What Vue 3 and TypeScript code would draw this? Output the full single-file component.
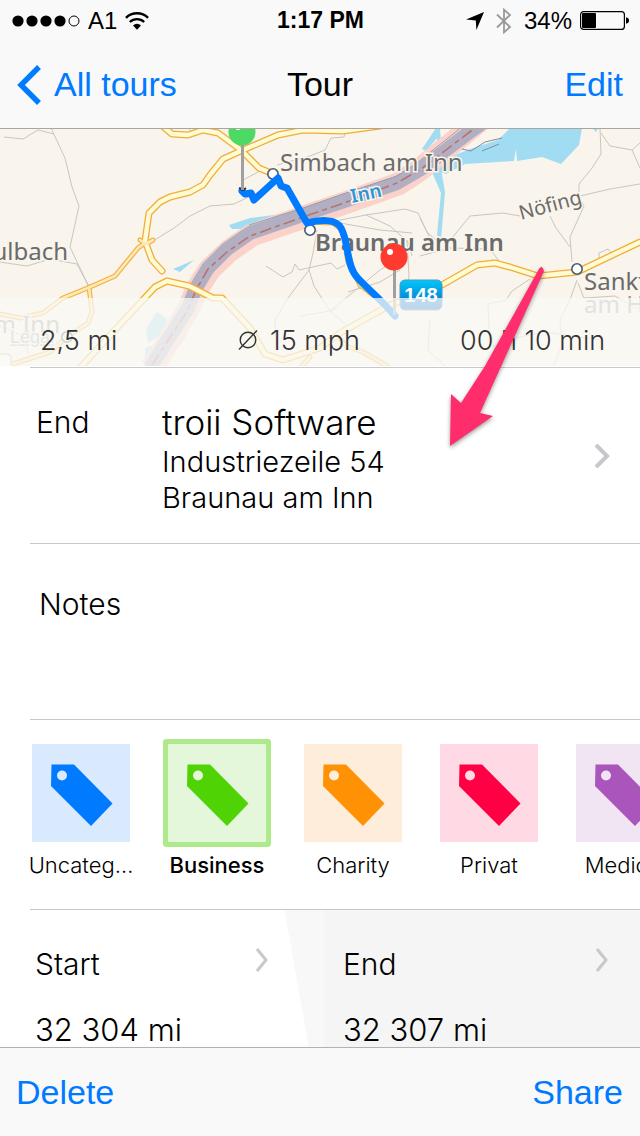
<script setup lang="ts">
import { ref } from 'vue'

interface Tag {
  id: string
  label: string
  shown: string
  tone: string
}

const tags: Tag[] = [
  { id: 'uncategorized', label: 'Uncategorized', shown: 'Uncateg…', tone: 'blue' },
  { id: 'business', label: 'Business', shown: 'Business', tone: 'green' },
  { id: 'charity', label: 'Charity', shown: 'Charity', tone: 'orange' },
  { id: 'privat', label: 'Privat', shown: 'Privat', tone: 'red' },
  { id: 'medical', label: 'Medical', shown: 'Medical', tone: 'purple' },
]

const selected = ref('business')
const notes = ref('')

const mainRoads: string[] = [
  'M160 124L172 134L188 135L203 130L218 133L241 150L259 168L271 173',
  'M380 126L343 131L303 130L278 135L243 150L223 159L210 175L203 185L190 192L170 197L160 202L149 213L145 241L152 260L162 271',
  'M80 368L113 332L155 287L167 281L189 286L213 298L222 298L236 313L250 328L265 354L283 360L320 348L340 333L390 305L442 285L477 265L495 263L510 267L538 276L577 272L640 242',
]

const sideRoads: string[] = [
  'M140 240L146 244L153 240M145 243L138 248L115 276L90 287L63 298L43 313L20 318L0 314',
  'M89 287L92 312L88 323L67 337L50 352L10 365',
  'M337 335L346 346L363 352L387 366M310 357L300 368',
  'M279 178L283 188L288 189L306 222L333 223L342 230L348 262L360 285L378 299',
]

const lanes: string[] = [
  'M4 137L23 139L38 130L54 134M51 128L65 158L72 187L79 206L70 247L89 287',
  'M0 262L27 266L50 259L77 264L89 287',
  'M153 241L174 228L190 216L210 206L234 204L263 190',
  'M243 180L262 170M277 165L310 156L325 150L331 138L344 137L345 132M189 128L191 132',
  'M330 222L366 215L405 209L418 213L427 232L438 242',
  'M340 223L380 230L412 233M366 215L390 226L408 242L412 256',
  'M266 266L283 277L292 272L295 264L299 270L331 263L337 269L345 265',
  'M317 230L313 253L309 270L314 286L330 311L350 328',
  'M309 270L288 298L275 320L276 345M330 311L380 270L399 258M338 308L330 311L300 316',
  'M348 292L380 282L400 270M407 240L409 276L405 300',
  'M600 128L601 154L592 168L579 184L579 196L584 206L570 237L572 262',
  'M601 133L610 146L632 150L640 143M632 150L640 168M580 196L610 189L640 184',
  'M452 238L470 216L503 213L520 216M550 216L556 228L570 247',
  'M420 218L430 238M420 256L450 248L490 249L499 261M599 260V253L608 249L612 254',
  'M530 279L512 291L506 300L488 304L489 330L500 368M577 280L571 297L560 320L562 345L553 368M578 283L584 298L615 296L640 310',
  'M430 320L428 350L445 366M505 340L545 332L600 340M0 326L23 336L30 358',
]
</script>

<template>
  <div class="screen">
    <header class="top">
      <div class="status">
        <div class="status-side">
          <svg class="signal" viewBox="0 0 68 12" aria-label="Signal strength 4 of 5" role="img">
            <circle cx="6" cy="6" r="5.6" /><circle cx="20" cy="6" r="5.6" />
            <circle cx="34" cy="6" r="5.6" /><circle cx="48" cy="6" r="5.6" />
            <circle cx="62" cy="6" r="5" fill="none" stroke="#000" />
          </svg>
          <span class="carrier">A1</span>
          <svg class="wifi" viewBox="0 0 24 18" aria-label="Wi-Fi" role="img">
            <path d="M0.9 5.8A16 16 0 0 1 23.1 5.8" fill="none" stroke="#000" stroke-width="2.4" />
            <path d="M4.8 10A10.4 10.4 0 0 1 19.2 10" fill="none" stroke="#000" stroke-width="2.3" />
            <path d="M12 17.8L8 13.4A6 6 0 0 1 16 13.4Z" />
          </svg>
        </div>
        <span class="clock">1:17 PM</span>
        <div class="status-side status-end">
          <svg class="locate" viewBox="0 0 18 18" aria-label="Location in use" role="img">
            <path d="M18 0L0 7.6L9.8 8.4L10.4 18Z" />
          </svg>
          <svg class="bluetooth" viewBox="0 0 16 26" aria-label="Bluetooth" role="img">
            <path d="M1 6.5L14 19L8 24.3V1.7L14 7L1 19.5" fill="none" stroke="#999" stroke-width="1.8" />
          </svg>
          <span>34%</span>
          <svg class="battery" viewBox="0 0 49 19" aria-label="Battery" role="img">
            <rect x="0.6" y="0.6" width="43.8" height="17.8" rx="3" fill="none" stroke="#000" stroke-width="1.2" />
            <rect x="2" y="2" width="14" height="15" rx="1" />
            <path d="M46 6.2Q49 6.8 49 9.5T46 12.8Z" />
          </svg>
        </div>
      </div>
      <nav class="nav">
        <a class="back" href="#tours">
          <svg class="back-icon" viewBox="0 0 25 40" aria-hidden="true">
            <path d="M22 2L4 20L22 38" fill="none" stroke="#007aff" stroke-width="5.4" />
          </svg>
          <span>All tours</span>
        </a>
        <h1 class="title">Tour</h1>
        <button class="bar-button edit" type="button">Edit</button>
      </nav>
    </header>

    <main class="content">
      <section class="map-area" aria-label="Route map">
        <svg class="map" viewBox="0 129 640 237" preserveAspectRatio="xMidYMid slice">
          <defs>
            <linearGradient id="shield" x1="0" y1="0" x2="0" y2="1">
              <stop offset="0" stop-color="#00c8f8" /><stop offset="1" stop-color="#0a62c8" />
            </linearGradient>
          </defs>
          <rect x="0" y="129" width="640" height="237" fill="#f9f5ed" />
          <g fill="none" stroke="#c9c6bf" stroke-width="1">
            <path v-for="d in lanes" :key="d" :d="d" />
          </g>
          <g fill="#a2dcf2">
            <path d="M510 128H582L579 145L561 164L542 157L517 161L516 149L514 161L465 164L446 174L436 170L452 156L473 148L498 140Z" />
            <path d="M436 170L441 169L445 192L441 240L437 235L441 193L432 172Z" />
            <path d="M440 128H436L422 149L426 151L437 138V147L441 143Z" />
            <path d="M592 128H598L596 132Z" />
            <path d="M229 225L250 218L298 212L290 222L253 232L244 229L232 229Z" />
            <path d="M173 269L194 260L180 272Z" />
            <path d="M157 312L167 319L165 332L148 343L146 329ZM161 343L145 348V357L155 352Z" />
            <path d="M176 340L197 310L184 340L160 366Z" />
          </g>
          <g fill="none" stroke-linejoin="round">
            <path d="M488 114L461 136L418 171L398 184L345 203L304 217L252 235L229 251L210 269L197 289L189 308L152 368" stroke="#fad2ca" stroke-width="23" />
            <path d="M492 116L471 131L421 169L397 183L344 201L303 215L250 233L227 249L208 268L196 288L188 308L150 368" stroke="#b3afc3" stroke-width="14" />
            <path d="M480 112L463 126L417 163L397 176L343 194L303 208L249 225" stroke="#9a9eac" stroke-width="1" />
            <path d="M492 116L471 131L421 169L397 183L344 203L303 217L250 236L227 252L208 269L196 290L188 310L150 368" stroke="#b8736c" stroke-width="1.6" stroke-dasharray="12 4 5 4" />
            <path d="M462 149L471 151L485 142L502 138M482 151L499 144" stroke="#858c94" stroke-width="1" />
          </g>
          <g fill="none" stroke-linejoin="round" stroke-linecap="round">
            <path v-for="d in mainRoads" :key="d" :d="d" stroke="#f1ad3a" stroke-width="7" />
            <path v-for="d in sideRoads" :key="d" :d="d" stroke="#f1b04a" stroke-width="5" />
            <path v-for="d in mainRoads" :key="d" :d="d" stroke="#fffbd2" stroke-width="4.4" />
            <path v-for="d in sideRoads" :key="d" :d="d" stroke="#fdeab2" stroke-width="2.6" />
          </g>
          <g fill="#fff" stroke="#475b75" stroke-width="1.6">
            <circle cx="273" cy="174" r="5.2" /><circle cx="310" cy="230" r="5.2" /><circle cx="577" cy="269" r="5.2" />
            <circle cx="67" cy="337" r="5.2" />
          </g>
          <g class="place">
            <text x="280" y="171">Simbach am Inn</text>
            <text class="strong" x="315" y="251">Braunau am Inn</text>
            <text x="68" y="260" text-anchor="end">aulbach</text>
            <text x="584" y="290">Sankt</text>
            <text class="dim" x="584" y="313">am H</text>
            <text class="dim" x="60" y="333" text-anchor="end">m Inn</text>
            <text class="small" transform="translate(521 220) rotate(-15)">Nöfing</text>
            <text class="river" transform="translate(352 203) rotate(-12)">Inn</text>
            <text class="legal" x="10" y="343">Legal</text>
          </g>
          <rect x="-12" y="354" width="23" height="20" rx="4" fill="#fff" stroke="#aaa" />
          <path
            d="M242 191L245 194L251 193L254 200L278 178L281 186L287 188L307 223C318 220 336 218 341 228C349 242 346 264 356 276C364 286 378 296 395 316"
            fill="none" stroke="#007aff" stroke-width="7" stroke-linejoin="round" stroke-linecap="round"
          />
          <rect x="400" y="280" width="42" height="30" rx="5" fill="url(#shield)" stroke="#4e95c8" />
          <text class="shield-text" x="421" y="302" text-anchor="middle">148</text>
          <g>
            <path d="M239 188L243 190L246 188" fill="none" stroke="#333" stroke-width="2" />
            <path d="M242.500 142V190M394.500 268V315" stroke="#a0a0a0" stroke-width="3" />
            <circle cx="242" cy="132" r="13.500" fill="#4cd964" /><circle cx="238" cy="127" r="3" fill="#fff" />
            <circle cx="394" cy="257" r="13.500" fill="#ff3b30" /><circle cx="390" cy="252" r="3" fill="#fff" />
          </g>
        </svg>
        <div class="stats">
          <span>2,5 mi</span>
          <span class="average">
            <svg class="average-icon" viewBox="0 0 20 22" aria-label="Average" role="img">
              <circle cx="10" cy="11" r="7.800" fill="none" stroke="#333" stroke-width="1.4" />
              <path d="M1 20.500L19 1.500" stroke="#333" stroke-width="1.4" />
            </svg>
            15 mph
          </span>
          <span>00 h 10 min</span>
        </div>
      </section>

      <a class="row place-row" href="#end">
        <span class="row-label">End</span>
        <span class="address">
          <span class="address-name">troii Software</span>
          <span>Industriezeile 54</span>
          <span>Braunau am Inn</span>
        </span>
        <svg class="row-chevron" viewBox="0 0 16 26" aria-hidden="true">
          <path d="M2 2L13 13L2 24" fill="none" stroke="#c7c7cc" stroke-width="4" />
        </svg>
      </a>

      <section class="row">
        <textarea v-model="notes" class="notes" placeholder="Notes" aria-label="Notes" />
      </section>

      <section class="row tags" aria-label="Category">
        <button
          v-for="tag in tags" :key="tag.id" type="button" class="tag"
          :class="[tag.tone, { selected: selected === tag.id }]"
          :aria-pressed="selected === tag.id" :aria-label="tag.label"
          @click="selected = tag.id"
        >
          <span class="tile">
            <svg viewBox="0 0 98 98" aria-hidden="true">
              <path
                fill-rule="evenodd"
                d="M19.500 20.500H42L80.500 59.500L59 82L19 42ZM30 26.500A5 5 0 1 0 30 36.500A5 5 0 1 0 30 26.500Z"
              />
            </svg>
          </span>
          <span class="tag-label">{{ tag.shown }}</span>
        </button>
      </section>

      <section class="row odometer">
        <a class="reading" href="#odometer-start">
          <span class="reading-head">
            <span>Start</span>
            <svg class="thin-chevron" viewBox="0 0 14 24" aria-hidden="true">
              <path d="M2 1L11 12L2 23" fill="none" stroke="#c8c8c8" stroke-width="3" />
            </svg>
          </span>
          <span class="value">32 304 mi</span>
        </a>
        <a class="reading reading-end" href="#odometer-end">
          <span class="reading-head">
            <span>End</span>
            <svg class="thin-chevron" viewBox="0 0 14 24" aria-hidden="true">
              <path d="M2 1L11 12L2 23" fill="none" stroke="#c8c8c8" stroke-width="3" />
            </svg>
          </span>
          <span class="value">32 307 mi</span>
        </a>
      </section>
    </main>

    <footer class="toolbar">
      <button class="bar-button" type="button">Delete</button>
      <button class="bar-button" type="button">Share</button>
    </footer>

    <svg class="pointer" viewBox="0 0 100 186" aria-hidden="true">
      <path d="M92 4Q95 -1 97 6L33 148L46 151L3 181L4 129L14 138L38 101Z" fill="#ff2d6b" />
    </svg>
  </div>
</template>

<style>
body {
  margin: 0;
  background: #fff;
}
</style>

<style scoped>
.screen {
  position: relative;
  display: flex;
  flex-direction: column;
  height: 100vh;
  overflow: hidden;
  background: #fff;
  color: #000;
  font-family: "Liberation Sans", Arial, sans-serif;
}
svg {
  display: block;
  flex: none;
}
a {
  color: inherit;
  text-decoration: none;
}
button {
  margin: 0;
  padding: 0;
  border: 0;
  background: none;
  font: inherit;
  cursor: pointer;
}
.top {
  flex: none;
  background: #f9f9f9;
  border-bottom: 1px solid #aaa69e;
}
.status {
  display: grid;
  grid-template-columns: 1fr auto 1fr;
  align-items: center;
  height: 41px;
  padding: 0 11px 0 12px;
  font-size: 24px;
}
.status-side {
  display: flex;
  align-items: center;
}
.status-end {
  justify-content: flex-end;
}
.signal {
  width: 68px;
  height: 12px;
}
.carrier {
  margin: 0 8px 0 8px;
}
.wifi {
  width: 24px;
  height: 18px;
}
.clock {
  font-size: 23px;
  font-weight: 700;
}
.locate {
  width: 18px;
  height: 18px;
  margin-right: 12px;
}
.bluetooth {
  width: 16px;
  height: 26px;
  margin-right: 12px;
}
.battery {
  width: 49px;
  height: 19px;
  margin-left: 8px;
}
.nav {
  display: grid;
  grid-template-columns: 1fr auto 1fr;
  align-items: center;
  height: 87px;
  padding: 0 17px;
  font-size: 34px;
}
.back {
  display: flex;
  align-items: center;
  gap: 12px;
  color: #007aff;
}
.back-icon {
  width: 25px;
  height: 40px;
}
.title {
  margin: 0;
  font-size: 34px;
  font-weight: 400;
}
.bar-button {
  color: #007aff;
  font-size: 34px;
}
.edit {
  justify-self: end;
}
.content {
  flex: 1;
  min-height: 0;
  overflow: hidden;
}
.map-area {
  display: grid;
  height: 237px;
  overflow: hidden;
}
.map {
  grid-area: 1 / 1;
  width: 100%;
  height: 237px;
}
.place {
  fill: #6b6b6b;
  stroke: #f9f5ed;
  stroke-width: 3px;
  paint-order: stroke;
  font-family: "Noto Sans", sans-serif;
  font-size: 24px;
  font-weight: 400;
}
.strong {
  font-weight: 600;
}
.small {
  font-size: 20px;
}
.dim {
  fill: #999;
}
.river {
  fill: #2f94d4;
  font-size: 19px;
  font-weight: 600;
}
.legal {
  fill: #aaa;
  font-family: "Liberation Sans", sans-serif;
  font-size: 18px;
  text-decoration: underline;
}
.shield-text {
  fill: #fff;
  font-size: 20px;
  font-weight: 700;
}
.stats {
  z-index: 1;
  grid-area: 1 / 1;
  align-self: end;
  display: grid;
  grid-template-columns: 198fr 222fr 180fr;
  align-items: center;
  height: 68px;
  padding: 16px 0 0 40px;
  box-sizing: border-box;
  background: rgba(248, 249, 245, 0.76);
  color: #333;
  font-family: Inter, "Liberation Sans", sans-serif;
  font-size: 27px;
  font-weight: 300;
}
.average {
  display: flex;
  align-items: center;
  gap: 12px;
}
.average-icon {
  width: 20px;
  height: 22px;
}
.row {
  position: relative;
  font-family: Inter, "Liberation Sans", sans-serif;
  font-size: 30px;
  font-weight: 300;
}
.row::before {
  content: "";
  position: absolute;
  z-index: 1;
  top: 0;
  left: 30px;
  right: 0;
  height: 1px;
  background: #c8c7cc;
}
.place-row {
  display: grid;
  grid-template-columns: 126px 1fr 16px;
  height: 176px;
  margin-top: 1px;
  padding: 35px 30px 0 36px;
  box-sizing: border-box;
}
.row-label {
  line-height: 40px;
}
.address {
  display: flex;
  flex-direction: column;
  font-size: 29px;
  line-height: 36px;
}
.address-name {
  font-size: 35px;
  line-height: 40px;
  padding-bottom: 2px;
}
.row-chevron {
  width: 16px;
  height: 26px;
  margin-top: 41px;
}
.notes {
  display: block;
  width: 100%;
  height: 176px;
  box-sizing: border-box;
  padding: 41px 39px;
  border: 0;
  outline: 0;
  resize: none;
  background: transparent;
  color: #000;
  font: inherit;
  line-height: 40px;
}
.notes::placeholder {
  color: #000;
  opacity: 1;
}
.tags {
  display: flex;
  height: 190px;
  padding: 25px 0 0 13px;
  box-sizing: border-box;
  overflow: hidden;
}
.tag {
  flex: none;
  display: flex;
  flex-direction: column;
  align-items: center;
  width: 136px;
  font-size: 22px;
  line-height: 28px;
}
.tile {
  width: 98px;
  height: 98px;
  margin-bottom: 9px;
}
.selected .tile {
  border-radius: 1px;
  box-shadow: 0 0 0 5px #aeea8b;
}
.selected .tag-label {
  font-weight: 500;
}
.blue .tile {
  background: #d9eaff;
  fill: #007aff;
}
.green .tile {
  background: #e4f7da;
  fill: #50d304;
}
.orange .tile {
  background: #ffeddb;
  fill: #ff9204;
}
.red .tile {
  background: #ffd9e3;
  fill: #ff0044;
}
.purple .tile {
  background: #f1e5f4;
  fill: #aa55bb;
}
.odometer {
  display: grid;
  grid-template-columns: 324fr 316fr;
  height: 176px;
  background: linear-gradient(80deg, #fff 0 47%, #f8f8f8 47%);
}
.reading {
  padding: 35px 55px 0 35px;
}
.reading-end {
  padding: 35px 31px 0 19px;
  background: #f5f5f5;
}
.reading-head {
  display: flex;
  justify-content: space-between;
  line-height: 40px;
}
.thin-chevron {
  width: 14px;
  height: 24px;
  margin-top: 4px;
}
.value {
  display: block;
  margin-top: 25px;
  font-size: 31px;
  line-height: 42px;
}
.toolbar {
  flex: none;
  display: flex;
  align-items: center;
  justify-content: space-between;
  height: 88px;
  padding: 0 17px 0 16px;
  border-top: 1px solid #b2b2b2;
  background: #f9f9f9;
}
.pointer {
  position: absolute;
  z-index: 2;
  top: 265px;
  left: 447px;
  width: 100px;
  height: 186px;
  filter: drop-shadow(0 2px 2px rgba(0, 0, 0, 0.4));
  pointer-events: none;
}
</style>
